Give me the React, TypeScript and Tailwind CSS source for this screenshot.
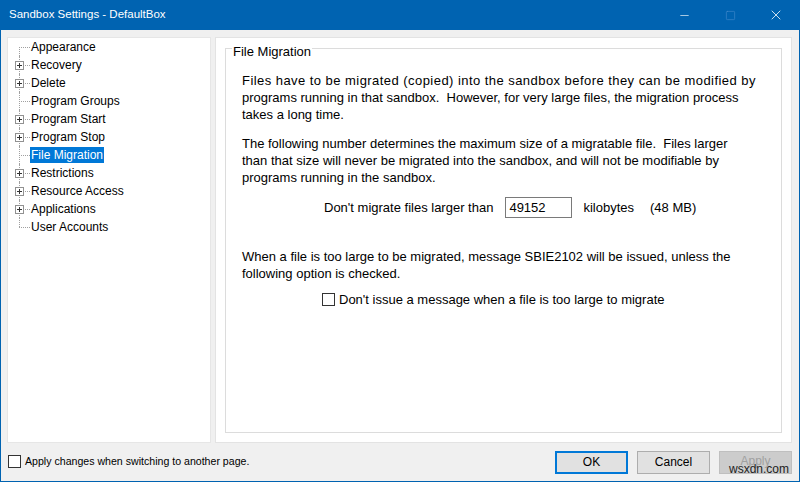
import { Minus, Square, X } from 'lucide-react'

type Node = { label: string; expandable?: boolean; selected?: boolean }

const NODES: Node[] = [
  { label: 'Appearance' },
  { label: 'Recovery', expandable: true },
  { label: 'Delete', expandable: true },
  { label: 'Program Groups' },
  { label: 'Program Start', expandable: true },
  { label: 'Program Stop', expandable: true },
  { label: 'File Migration', selected: true },
  { label: 'Restrictions', expandable: true },
  { label: 'Resource Access', expandable: true },
  { label: 'Applications', expandable: true },
  { label: 'User Accounts' },
]

const FONT = "font-['Liberation_Sans',Arial,sans-serif]"

function TreeRow({ node, first, last }: { node: Node; first: boolean; last: boolean }) {
  return (
    <div className="flex h-[18px] items-center">
      {/* connector lines + expander */}
      <div className="relative h-full w-[22px] shrink-0">
        <div
          className={`absolute left-[11px] w-0 border-l border-dotted border-[#a0a0a0] ${first ? 'top-[9px]' : 'top-0'} ${last ? 'h-[9px]' : 'bottom-0'}`}
        />
        <div className="absolute left-[11px] top-[9px] h-0 w-[11px] border-t border-dotted border-[#a0a0a0]" />
        {node.expandable && (
          <div className="absolute left-[7px] top-[5px] flex h-[9px] w-[9px] items-center justify-center border border-[#919191] bg-white">
            <div className="absolute h-px w-[5px] bg-[#333]" />
            <div className="absolute h-[5px] w-px bg-[#333]" />
          </div>
        )}
      </div>
      <span
        className={`px-[1px] text-[12px] leading-[16px] ${node.selected ? 'bg-[#0078d7] text-white' : 'text-black'}`}
      >
        {node.label}
      </span>
    </div>
  )
}

function Checkbox() {
  return <div className="h-[13px] w-[13px] shrink-0 border border-[#333] bg-white" />
}

export default function App() {
  return (
    <div className={`relative flex h-[482px] w-[800px] flex-col border-x border-b border-[#0063b1] bg-[#f0f0f0] ${FONT}`}>
      {/* title bar */}
      <div className="flex h-[30px] shrink-0 items-center bg-[#0063b1] pl-[8px] text-white">
        <span className="flex-1 text-[11.5px]">Sandbox Settings - DefaultBox</span>
        <div className="flex h-full items-center">
          <div className="flex h-full w-[46px] items-center justify-center">
            <Minus size={13} strokeWidth={1.2} />
          </div>
          <div className="flex h-full w-[46px] items-center justify-center text-[#4d8fcf]">
            <Square size={11} strokeWidth={1.2} />
          </div>
          <div className="flex h-full w-[46px] items-center justify-center">
            <X size={16} strokeWidth={1.2} />
          </div>
        </div>
      </div>

      {/* body */}
      <div className="flex gap-[4px] pl-[6px] pr-[7px] pt-[7px]">
        <div className="h-[406px] w-[204px] shrink-0 border border-[#e6e6e6] bg-white">
          {NODES.map((n, i) => (
            <TreeRow key={n.label} node={n} first={i === 0} last={i === NODES.length - 1} />
          ))}
        </div>

        <div className="h-[406px] flex-1 border border-[#e3e3e3] bg-white px-[9px] pb-[9px] pt-[10px]">
          <div className="relative h-full border border-[#dcdcdc] pl-[16px] pt-[23px] text-[13px] leading-[17px] text-black">
            <span className="absolute -top-[4px] left-[6px] bg-white px-[1px] leading-[13px]">File Migration</span>
            <p>
              <span className="tracking-[0.45px]">Files have to be migrated (copied) into the sandbox before they can be modified by</span>
              <br />
              programs running in that sandbox.&nbsp; However, for very large files, the migration process
              <br />
              takes a long time.
            </p>
            <p className="mt-[12px]">
              The following number determines the maximum size of a migratable file.&nbsp; Files larger
              <br />
              than that size will never be migrated into the sandbox, and will not be modifiable by
              <br />
              programs running in the sandbox.
            </p>
            <div className="mt-[11px] flex items-center pl-[82px]">
              <span>Don't migrate files larger than</span>
              <div className="ml-[12px] flex h-[21px] w-[67px] items-center border border-[#7a7a7a] px-[3px]">49152</div>
              <span className="ml-[11px]">kilobytes</span>
              <span className="ml-[16px]">(48 MB)</span>
            </div>
            <p className="mt-[30px]">
              When a file is too large to be migrated, message SBIE2102 will be issued, unless the
              <br />
              following option is checked.
            </p>
            <div className="mt-[9px] flex items-center gap-[4px] pl-[80px]">
              <Checkbox />
              <span>Don't issue a message when a file is too large to migrate</span>
            </div>
          </div>
        </div>
      </div>

      {/* footer */}
      <div className="flex flex-1 items-center pl-[7px] pr-[7px]">
        <div className="flex flex-1 items-center gap-[4px] text-[10.6px]">
          <Checkbox />
          <span>Apply changes when switching to another page.</span>
        </div>
        <div className="flex gap-[9px] text-[12px]">
          <button className="h-[23px] w-[73px] border-2 border-[#0078d7] bg-[#e1e1e1]">OK</button>
          <button className="h-[23px] w-[73px] border border-[#adadad] bg-[#e1e1e1]">Cancel</button>
          <button className="h-[23px] w-[73px] border border-[#bfbfbf] bg-[#cccccc] pb-[4px] text-[#a0a0a0]">Apply</button>
        </div>
      </div>

      <span className="absolute bottom-[5px] right-[10px] text-[12px] leading-[14px] text-[#222]">wsxdn.com</span>
    </div>
  )
}
